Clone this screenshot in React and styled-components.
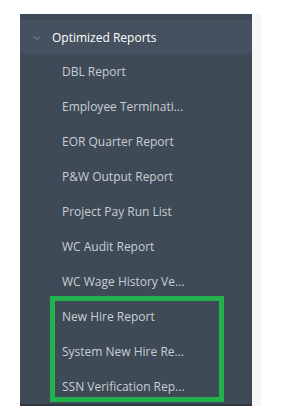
import React from 'react';
import styled, { createGlobalStyle } from 'styled-components';

const GlobalStyle = createGlobalStyle`
    body {
        margin: 0;
        background: #ffffff;
        font-family: "Open Sans", "Liberation Sans", sans-serif;
    }
`;

const Page = styled.div`
    padding: 14px 0 0 20px;
    display: flex;
    flex-direction: row;
    align-items: stretch;
`;

const Panel = styled.div`
    width: 232px;
    background-color: #3e4a56;
    display: flex;
    flex-direction: column;
    padding-top: 6px;
`;

const Track = styled.div`
    width: 9px;
    background-color: #f7f7f8;
`;

const Header = styled.div`
    height: 34px;
    background-color: #45515e;
    display: flex;
    align-items: center;
    padding-left: 13px;
    color: #ffffff;
    font-size: 12px;

    svg {
        width: 8px;
        height: 8px;
        margin-right: 11px;
        margin-top: 1px;
    }
`;

const List = styled.ul`
    list-style: none;
    margin: 0;
    padding: 0;
`;

const Group = styled.div`
    position: relative;
`;

const Highlight = styled.div`
    position: absolute;
    left: 30px;
    top: -3px;
    width: 174px;
    height: 106px;
    box-sizing: border-box;
    border: 5px solid #22b14c;
    pointer-events: none;
`;

const Item = styled.li`
    height: 35px;
    display: flex;
    align-items: center;
    padding-left: 42px;
    color: #c9ced5;
    font-size: 12px;
    white-space: nowrap;
`;

const Footer = styled.div`
    height: 2px;
    background-color: #2f3740;
`;

// labels are shortened the same way the sidebar shows them
const reports = [
    'DBL Report',
    'Employee Terminati...',
    'EOR Quarter Report',
    'P&W Output Report',
    'Project Pay Run List',
    'WC Audit Report',
    'WC Wage History Ve...',
];

const marked = [
    'New Hire Report',
    'System New Hire Re...',
    'SSN Verification Rep...',
];

const App = () => {
    return (
        <Page>
            <GlobalStyle />
            <Panel>
                <Header>
                    <svg viewBox="0 0 8 8" fill="none">
                        <path d="M1 2.5 L4 5.5 L7 2.5" stroke="#8a95a1" strokeWidth="1" />
                    </svg>
                    Optimized Reports
                </Header>
                <List>
                    {reports.map((r) => (
                        <Item key={r}>{r}</Item>
                    ))}
                    <Group>
                        {marked.map((r) => (
                            <Item key={r}>{r}</Item>
                        ))}
                        <Highlight />
                    </Group>
                </List>
                <Footer />
            </Panel>
            <Track />
        </Page>
    );
};

export default App;
